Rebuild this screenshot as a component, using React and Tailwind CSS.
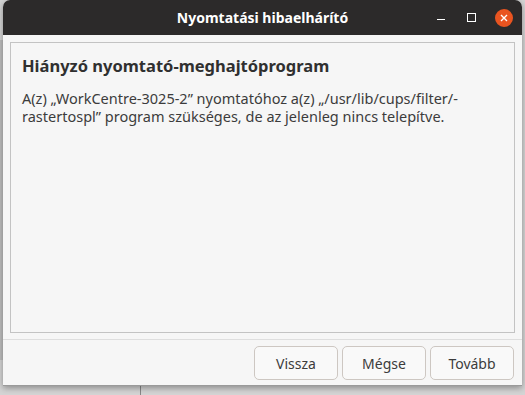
export default function App() {
  return (
    <div
      className="relative w-[525px] h-[395px] overflow-hidden bg-[#d4d4d4]"
      style={{ fontFamily: '"Noto Sans", "Open Sans", sans-serif' }}
    >
      {/* bits of windows behind */}
      <div className="absolute left-0 top-[40px] w-[3px] h-[320px] bg-[#bdbdbd]" />
      <div className="absolute left-[140px] top-[386px] w-px h-[9px] bg-[#888]" />

      <div className="relative ml-[3px] w-[519px] h-[386px] flex flex-col rounded-t-[7px] overflow-hidden bg-[#f6f6f6] shadow-[0_2px_6px_rgba(0,0,0,0.35)] border-b border-[#9a9a9a]">
        {/* Title bar */}
        <div className="relative h-[35px] shrink-0 bg-[#2c2a2a] flex items-center justify-center">
          <span className="text-white text-[14px] font-bold">Nyomtatási hibaelhárító</span>
          <div className="absolute right-[9px] top-0 h-full flex items-center">
            <div className="w-[8px] h-px bg-white mr-[22px] mt-[4px]" />
            <div className="w-[9px] h-[9px] border border-white mr-[19px]" />
            <div className="w-[18px] h-[18px] rounded-full bg-[#e95420] flex items-center justify-center">
              <svg width="8" height="8" viewBox="0 0 8 8">
                <path d="M1 1L7 7M7 1L1 7" stroke="white" strokeWidth="1.4" />
              </svg>
            </div>
          </div>
        </div>

        {/* Frame */}
        <div className="mx-[7px] mt-[7px] h-[291px] border border-[#c3c3c3] bg-[#f6f6f6] px-[11px] pt-[11px]">
          <h1 className="text-[16.5px] font-bold text-[#303030] leading-[24px]">Hiányzó nyomtató-meghajtóprogram</h1>
          <p className="mt-[12px] text-[14.5px] leading-[17.5px] text-[#3c3c3c] w-[480px]">
            A(z) „WorkCentre-3025-2” nyomtatóhoz a(z) „/usr/lib/cups/filter/-
            <br />
            rastertospl” program szükséges, de az jelenleg nincs telepítve.
          </p>
        </div>

        <div className="mt-[6px] h-px bg-[#dedede]" />

        {/* Buttons */}
        <div className="flex justify-end gap-[4px] pr-[8px] pt-[6px]">
          {['Vissza', 'Mégse', 'Tovább'].map((l) => (
            <button
              key={l}
              className="w-[84px] h-[34px] rounded-[5px] border border-[#cdc7c2] bg-[#f9f9f9] text-[14px] text-[#3c3c3c]"
            >
              {l}
            </button>
          ))}
        </div>
      </div>
    </div>
  );
}
